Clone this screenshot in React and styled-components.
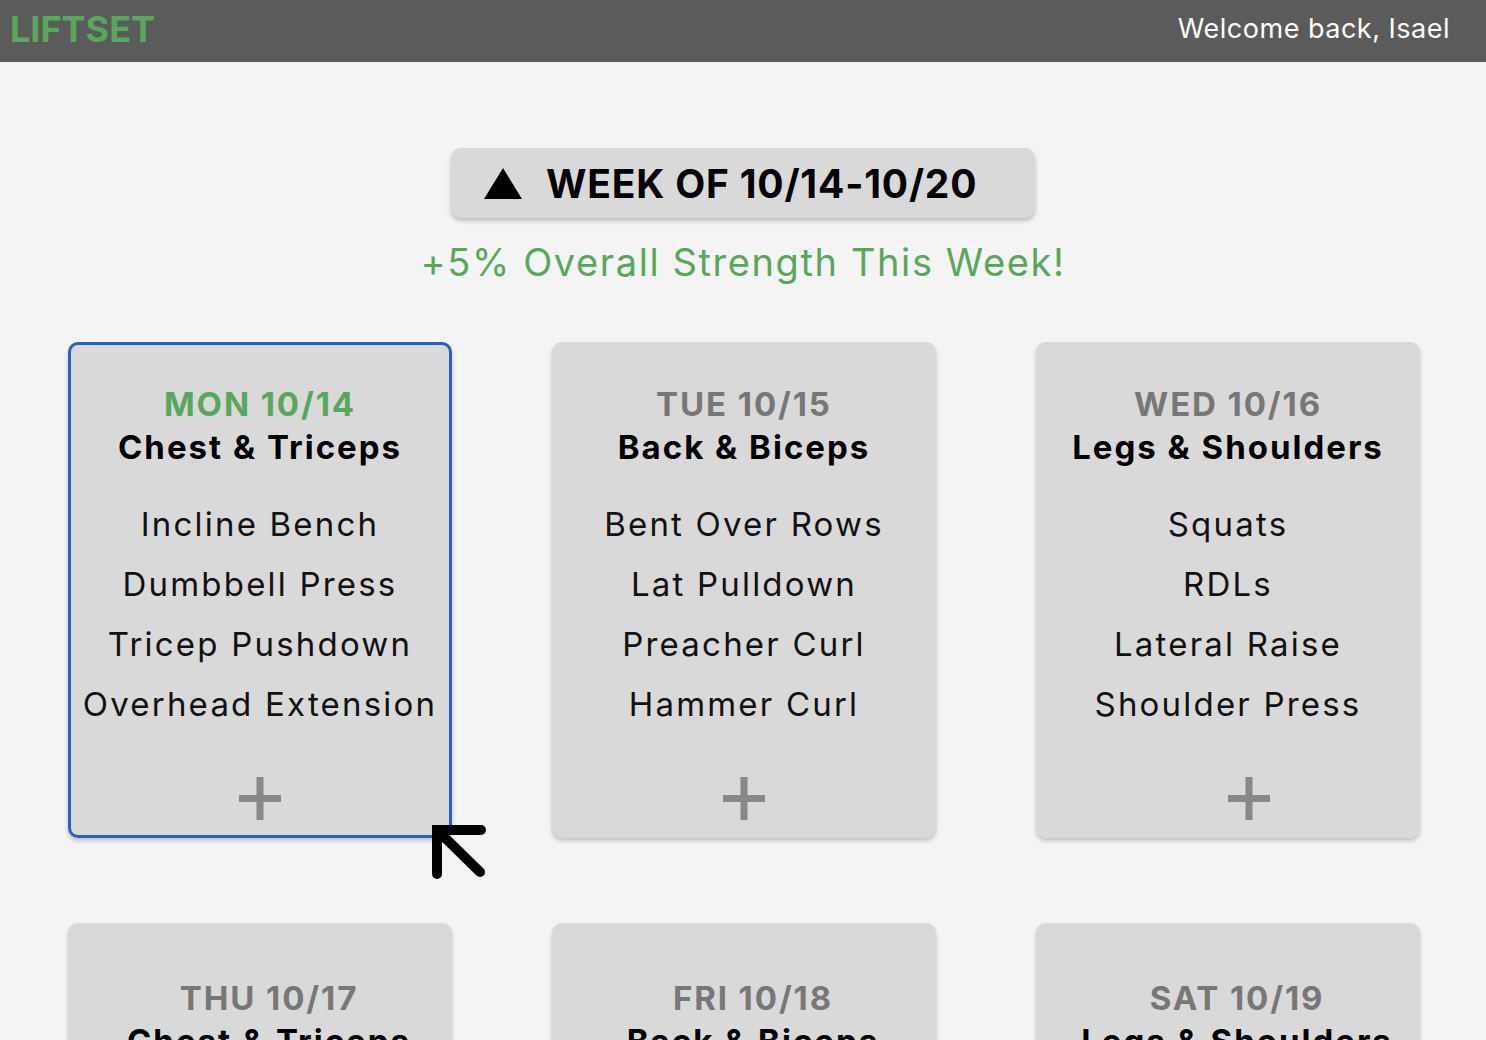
import React from "react";
import styled, { createGlobalStyle } from "styled-components";

const Global = createGlobalStyle`
  html, body { margin: 0; padding: 0; background: #f4f4f4; }
  body { font-family: Inter, "Open Sans", sans-serif; overflow: hidden; }
  * { box-sizing: border-box; }
`;

const Page = styled.div`
  width: 1486px;
  height: 1040px;
  overflow: hidden;
  background: #f4f4f4;
  display: flex;
  flex-direction: column;
`;

const TopBar = styled.header`
  height: 62px;
  flex: none;
  background: #5b5b5b;
  display: flex;
  align-items: center;
  justify-content: space-between;
  padding: 0 36px 5px 10px;
`;

const Logo = styled.div`
  color: #57a85a;
  font-weight: 700;
  font-size: 36px;
  letter-spacing: 0px;
`;

const Welcome = styled.div`
  color: #ffffff;
  font-size: 27px;
  font-weight: 400;
  letter-spacing: 0.5px;
`;

const Main = styled.main`
  display: flex;
  flex-direction: column;
  align-items: center;
  padding-top: 86px;
`;

const WeekButton = styled.button`
  width: 584px;
  height: 70px;
  border: none;
  border-radius: 10px;
  background: #d9d9d9;
  box-shadow: 0 3px 4px rgba(0, 0, 0, 0.22);
  display: flex;
  align-items: center;
  padding: 0 0 0 33px;
  gap: 24px;
  font-family: inherit;
  font-size: 39px;
  font-weight: 700;
  letter-spacing: 0.8px;
  color: #000;
  cursor: pointer;
`;

const Strength = styled.div`
  margin-top: 21px;
  color: #57a85a;
  font-size: 38px;
  font-weight: 400;
  letter-spacing: 1.6px;
  line-height: 46px;
`;

const Grid = styled.div`
  margin-top: 57px;
  margin-left: 2px;
  display: grid;
  grid-template-columns: repeat(3, 384px);
  column-gap: 100px;
  row-gap: 85px;
`;

const Card = styled.div`
  position: relative;
  height: 496px;
  border-radius: 10px;
  background: #d9d9d9;
  box-shadow: 0 3px 4px rgba(0, 0, 0, 0.2);
  border: 3px solid ${(p) => (p.$active ? "#2b5fc3" : "transparent")};
  display: flex;
  flex-direction: column;
  align-items: center;
  padding-top: ${(p) => p.$top}px;
  padding-left: ${(p) => p.$shift}px;
  text-align: center;
`;

const Day = styled.div`
  color: ${(p) => (p.$active ? "#57a85a" : "#777777")};
  font-size: 33px;
  font-weight: 700;
  letter-spacing: 1.9px;
  line-height: 43px;
`;

const Group = styled.div`
  color: #000;
  font-size: 33px;
  font-weight: 700;
  letter-spacing: 2px;
  line-height: 43px;
`;

const Exercises = styled.ul`
  list-style: none;
  margin: 25px 0 0;
  padding: 0;
`;

const Exercise = styled.li`
  color: #111;
  font-size: 33px;
  font-weight: 400;
  letter-spacing: 2.2px;
  line-height: 60px;
  white-space: nowrap;
`;

const AddButton = styled.button`
  margin-top: 43px;
  margin-left: ${(p) => p.$shift * 2}px;
  width: 44px;
  height: 44px;
  border: none;
  background: transparent;
  padding: 0;
  cursor: pointer;
  display: flex;
`;

const Cursor = styled.svg`
  position: absolute;
  right: -42px;
  bottom: -49px;
`;

const Triangle = () => (
  <svg width="38" height="31" viewBox="0 0 38 31">
    <polygon points="19,0 38,31 0,31" fill="#000" />
  </svg>
);

const Plus = () => (
  <svg width="44" height="44" viewBox="0 0 44 44">
    <rect x="1" y="18" width="42" height="7" fill="#888" />
    <rect x="18.5" y="0" width="7" height="43" fill="#888" />
  </svg>
);

const days = [
  { day: "MON 10/14", group: "Chest & Triceps", ex: ["Incline Bench", "Dumbbell Press", "Tricep Pushdown", "Overhead Extension"], active: true },
  { day: "TUE 10/15", group: "Back & Biceps", ex: ["Bent Over Rows", "Lat Pulldown", "Preacher Curl", "Hammer Curl"] },
  { day: "WED 10/16", group: "Legs & Shoulders", ex: ["Squats", "RDLs", "Lateral Raise", "Shoulder Press"], plusShift: 21 },
  { day: "THU 10/17", group: "Chest & Triceps", ex: ["Incline Bench", "Dumbbell Press", "Tricep Pushdown", "Overhead Extension"], row2: true },
  { day: "FRI 10/18", group: "Back & Biceps", ex: ["Bent Over Rows", "Lat Pulldown", "Preacher Curl", "Hammer Curl"], row2: true },
  { day: "SAT 10/19", group: "Legs & Shoulders", ex: ["Squats", "RDLs", "Lateral Raise", "Shoulder Press"], row2: true },
];

export default function App() {
  return (
    <>
      <Global />
      <Page>
        <TopBar>
          <Logo>LIFTSET</Logo>
          <Welcome>Welcome back, Isael</Welcome>
        </TopBar>
        <Main>
          <WeekButton>
            <Triangle />
            WEEK OF 10/14-10/20
          </WeekButton>
          <Strength>+5% Overall Strength This Week!</Strength>
          <Grid>
            {days.map((d) => (
              <Card key={d.day} $active={d.active} $top={d.row2 ? 51 : 38} $shift={d.row2 ? 18 : 0}>
                <Day $active={d.active}>{d.day}</Day>
                <Group>{d.group}</Group>
                <Exercises>
                  {d.ex.map((e) => (
                    <Exercise key={e}>{e}</Exercise>
                  ))}
                </Exercises>
                <AddButton aria-label="Add exercise" $shift={d.plusShift || 0}>
                  <Plus />
                </AddButton>
                {d.active && (
                  <Cursor width="60" height="60" viewBox="0 0 60 60">
                    <path d="M6 50 V6 H50 M6 6 L49 48" stroke="#000" strokeWidth="10" fill="none" strokeLinecap="round" strokeLinejoin="miter" />
                  </Cursor>
                )}
              </Card>
            ))}
          </Grid>
        </Main>
      </Page>
    </>
  );
}
